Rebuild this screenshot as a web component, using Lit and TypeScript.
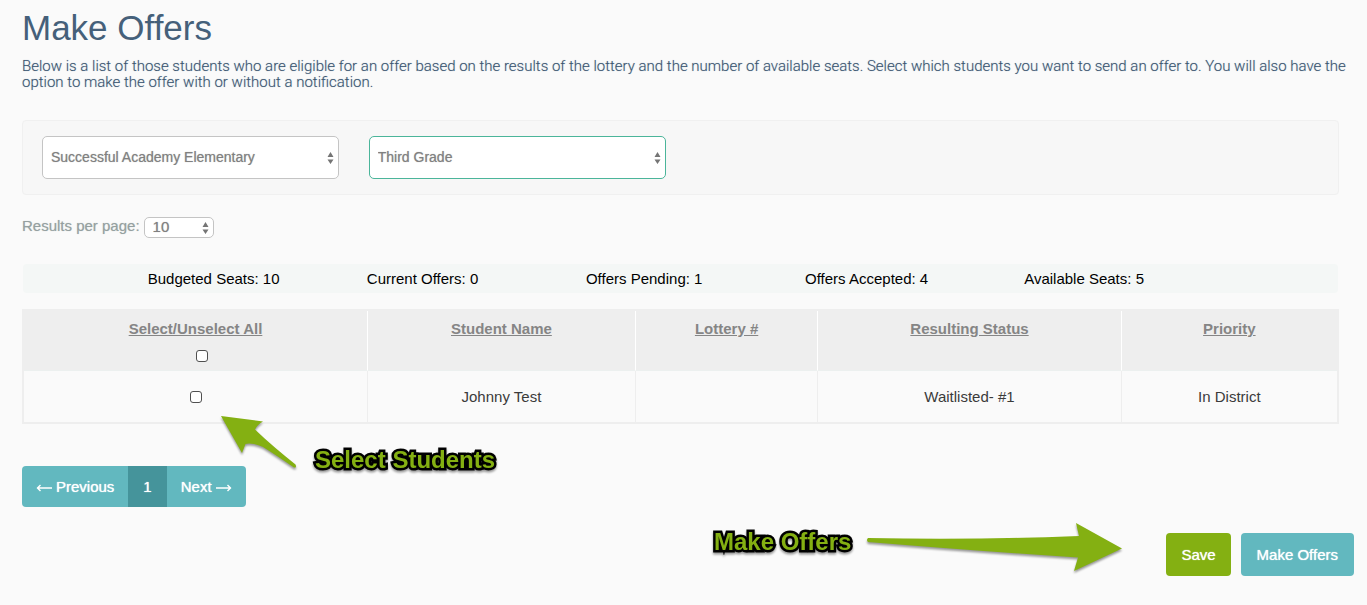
import { LitElement, html, css, svg } from "lit";
import { customElement, state } from "lit/decorators.js";

interface Student {
  name: string;
  lottery: string;
  status: string;
  priority: string;
}

const STATS = [
  ["Budgeted Seats", 10],
  ["Current Offers", 0],
  ["Offers Pending", 1],
  ["Offers Accepted", 4],
  ["Available Seats", 5],
] as const;

const STUDENTS: Student[] = [
  { name: "Johnny Test", lottery: "", status: "Waitlisted- #1", priority: "In District" },
];

const updown = html`<svg class="updown" viewBox="0 0 7 12" width="7" height="12" aria-hidden="true">
  ${svg`<path d="M3.5 0 6.5 5H.5zM.5 7.5h6L3.5 12z" fill="#757575" />`}
</svg>`;

const thinArrow = (d: string) => html`<svg viewBox="0 0 16 10" width="16" height="10" aria-hidden="true">
  ${svg`<path d=${d} fill="none" stroke="#fff" stroke-width="1.4" />`}
</svg>`;

@customElement("app-root")
export class AppRoot extends LitElement {
  @state() private selected = new Set<number>();

  static styles = css`
    :host {
      display: block;
      box-sizing: border-box;
      min-height: 100vh;
      padding: 8px 28px 28px 22px;
      background: #fafafa;
      color: #3b3b3b;
      font: 15px/16px "Liberation Sans", Arial, Helvetica, sans-serif;
    }
    *, *::before, *::after { box-sizing: border-box; }

    h1 {
      margin: 0;
      font-size: 35px;
      line-height: 40px;
      font-weight: 400;
      color: #45607a;
    }
    .intro {
      margin: 10px -10px 0 0;
      color: #3a5570;
      font-family: Roboto, "Liberation Sans", sans-serif;
      font-weight: 300;
      text-shadow: 0 0 1px #a0b0c0;
    }

    .filters {
      display: grid;
      grid-template-columns: repeat(4, 1fr);
      gap: 30px;
      margin-top: 30px;
      padding: 15px 19px;
      background: #f7f7f7;
      border: 1px solid #f0f0f0;
      border-radius: 4px;
    }
    .pick { position: relative; display: block; }
    .pick .updown {
      position: absolute;
      right: 5px;
      top: 50%;
      margin-top: -6px;
      pointer-events: none;
    }
    select {
      appearance: none;
      display: block;
      width: 100%;
      height: 43px;
      margin: 0;
      padding: 0 20px 2px 8px;
      border: 1px solid #c4c4c4;
      border-radius: 5px;
      background: #fff;
      color: #808080;
      font: inherit;
      font-size: 14px;
      text-shadow: 0 0 1px #b0b0b0;
    }
    .active select { border-color: #4bb59a; }

    .paging {
      display: flex;
      align-items: center;
      gap: 4px;
      margin-top: 22px;
      color: #95a0a0;
    }
    .paging label { padding-bottom: 3px; text-shadow: 0 0 1px #c0c8c8; }
    .paging .pick { width: 70px; }
    .paging select { height: 21px; font-size: 15px; }

    .stats {
      display: grid;
      grid-template-columns: repeat(5, 1fr);
      margin: 26px 1px 0;
      padding: 7px 8.333% 6px;
      background: #f4f7f6;
      border-radius: 4px;
      color: #000;
      list-style: none;
    }
    .stats li { padding-left: 15px; }

    .board { position: relative; margin-top: 16px; }
    table {
      width: 100%;
      table-layout: fixed;
      border-collapse: separate;
      border-spacing: 0;
      border: 2px solid #eee;
      text-align: center;
    }
    .c-select { width: 26.2%; }
    .c-name { width: 20.4%; }
    .c-lottery { width: 13.9%; }
    .c-status { width: 23.1%; }
    th {
      height: 60px;
      padding: 10px 8px 8px;
      background: #eee;
      border-bottom: 1px solid #ecf0ef;
      border-right: 1px solid #fff;
      vertical-align: top;
      color: #858585;
    }
    th a { color: inherit; }
    td {
      height: 51px;
      padding: 0 8px;
      border-right: 1px solid #eee;
    }
    th:last-child, td:last-child { border-right: 0; }
    input[type="checkbox"] {
      appearance: none;
      display: block;
      width: 12px;
      height: 12px;
      margin: 0 auto;
      border: 1px solid #505050;
      border-radius: 3px;
      background: #fff;
    }
    input[type="checkbox"]:checked { background: #45949b; }
    .all { display: block; margin-top: 13px; padding-left: 13px; }

    .callout {
      color: #84b012;
      font-size: 24px;
      line-height: 28px;
      font-weight: 700;
      white-space: nowrap;
      -webkit-text-stroke: 5px #000;
      paint-order: stroke fill;
      filter: drop-shadow(0 2px 1px rgba(0, 0, 0, 0.4));
    }
    .arrow { display: block; fill: #84b012; overflow: visible; filter: drop-shadow(0 2px 1px rgba(0, 0, 0, 0.4)); }
    .hint {
      position: absolute;
      left: 199px;
      top: 101px;
      display: flex;
      align-items: center;
      gap: 18px;
      pointer-events: none;
    }
    .hint .callout { padding-top: 36px; }

    .pager { display: flex; margin-top: 42px; }
    .pager button {
      display: flex;
      align-items: center;
      gap: 4px;
      padding: 0 14px;
      height: 41px;
      border: 0;
      background: #62b8bf;
      color: #fff;
      font: inherit;
      text-shadow: 0 0 1px #fff;
    }
    .pager svg { margin-top: 2px; }
    .pager button:first-child { border-radius: 4px 0 0 4px; }
    .pager button:last-child { border-radius: 0 4px 4px 0; }
    .pager .current { padding: 0 15px; background: #45949b; }

    .actions {
      display: flex;
      justify-content: flex-end;
      align-items: center;
      gap: 10px;
      margin: 26px -15px 0 0;
    }
    .actions .callout { margin: -26px 6px 0 0; }
    .actions .arrow { margin: -16px 34px 0 0; }
    .btn {
      height: 43px;
      padding: 0 16px;
      border: 0;
      border-radius: 4px;
      background: #62b8bf;
      color: #fff;
      font: inherit;
      text-shadow: 0 0 1px #fff;
    }
    .save { padding: 0 15px; background: #84b012; }
  `;

  private toggleAll(e: Event) {
    const on = (e.target as HTMLInputElement).checked;
    this.selected = new Set(on ? STUDENTS.map((_, i) => i) : []);
  }

  private toggle(i: number) {
    const next = new Set(this.selected);
    if (!next.delete(i)) next.add(i);
    this.selected = next;
  }

  render() {
    return html`
      <h1>Make Offers</h1>
      <p class="intro">
        Below is a list of those students who are eligible for an offer based on the results of the lottery and the
        number of available seats. Select which students you want to send an offer to. You will also have the option to
        make the offer with or without a notification.
      </p>

      <div class="filters">
        <label class="pick">
          <select aria-label="School"><option>Successful Academy Elementary</option></select>${updown}
        </label>
        <label class="pick active">
          <select aria-label="Grade"><option>Third Grade</option></select>${updown}
        </label>
      </div>

      <div class="paging">
        <label for="per-page">Results per page:</label>
        <span class="pick"><select id="per-page"><option>10</option></select>${updown}</span>
      </div>

      <ul class="stats">
        ${STATS.map(([label, n]) => html`<li>${label}: ${n}</li>`)}
      </ul>

      <div class="board">
        <table>
          <colgroup>
            <col class="c-select" /><col class="c-name" /><col class="c-lottery" /><col class="c-status" /><col />
          </colgroup>
          <thead>
            <tr>
              <th>
                <a href="#all">Select/Unselect All</a>
                <span class="all">
                  <input type="checkbox" aria-label="Select all students"
                    .checked=${this.selected.size === STUDENTS.length} @change=${this.toggleAll} />
                </span>
              </th>
              <th><a href="#name">Student Name</a></th>
              <th><a href="#lottery">Lottery #</a></th>
              <th><a href="#status">Resulting Status</a></th>
              <th><a href="#priority">Priority</a></th>
            </tr>
          </thead>
          <tbody>
            ${STUDENTS.map((s, i) => html`
              <tr>
                <td>
                  <input type="checkbox" aria-label=${s.name}
                    .checked=${this.selected.has(i)} @change=${() => this.toggle(i)} />
                </td>
                <td>${s.name}</td>
                <td>${s.lottery}</td>
                <td>${s.status}</td>
                <td>${s.priority}</td>
              </tr>`)}
          </tbody>
        </table>
        <div class="hint">
          <svg class="arrow" viewBox="0 0 76 52" width="76" height="52" aria-hidden="true">
            <path d="M0 0 42 5.500Q36 9 34 13.500C46 25 60 37 74.500 48.500Q76 52 73 51.500C62 44 52 37 42 31Q30 26 24.500 28L21 37Z" />
          </svg>
          <span class="callout">Select Students</span>
        </div>
      </div>

      <nav class="pager" aria-label="Pages">
        <button type="button">${thinArrow("M1 5H16M4.500 2 1.500 5 4.500 8")}Previous</button>
        <button type="button" class="current" aria-current="page">1</button>
        <button type="button">Next${thinArrow("M0 5H15M11.500 2 14.500 5 11.500 8")}</button>
      </nav>

      <div class="actions">
        <span class="callout">Make Offers</span>
        <svg class="arrow" viewBox="0 0 255 48" width="255" height="48" aria-hidden="true">
          <path d="M1 15Q110 17 212 13L209 0 255 25.500 207 48 211 34.500Q110 28 1 19Q-1 17 1 15Z" />
        </svg>
        <button type="button" class="btn save">Save</button>
        <button type="button" class="btn">Make Offers</button>
      </div>
    `;
  }
}
